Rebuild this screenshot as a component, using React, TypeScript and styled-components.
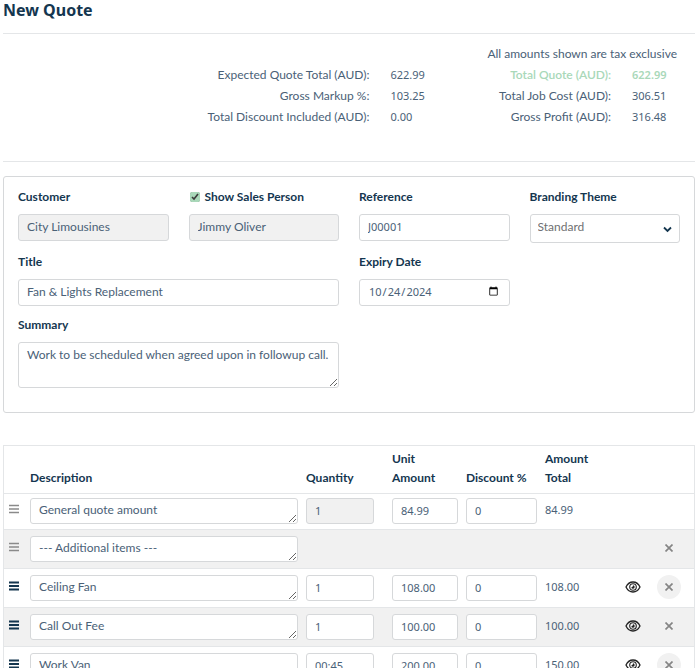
import React from 'react';
import styled, { createGlobalStyle, css } from 'styled-components';

const ink = '#4a6177';
const heading = '#14364f';
const line = '#e4e6e8';
const controlLine = '#d6d8da';
const shade = '#f1f1f1';
const mint = '#a9d8b9';
const figureFont = css`
  font-family: "Noto Sans", sans-serif;
  font-size: 11px;
`;

const GlobalStyle = createGlobalStyle`
  *, *::before, *::after { box-sizing: border-box; }
  html { scrollbar-width: none; }
  body {
    margin: 0;
    background: #fff;
    color: ${ink};
    font: 12px/20px Lato, "Noto Sans", sans-serif;
  }
  input, textarea, select, button { font: inherit; color: inherit; margin: 0; }
`;

const Page = styled.main`
  padding: 0 5px 0 3px;
`;

const Header = styled.header`
  height: 34px;
  border-bottom: 1px solid ${line};
`;

const PageTitle = styled.h1`
  margin: 0;
  color: ${heading};
  font-family: "Noto Sans", sans-serif;
  font-size: 16px;
  line-height: 20px;
  font-weight: 700;
`;

const Totals = styled.section`
  display: flex;
  justify-content: flex-end;
  align-items: flex-end;
  gap: 52px;
  padding: 9px 18px 34px 0;
  border-bottom: 1px solid ${line};
`;

const TotalsGroup = styled.div`
  display: flex;
  flex-direction: column;
  align-items: flex-end;
`;

const Note = styled.p`
  margin: 0;
  line-height: 21px;
`;

const Figures = styled.dl`
  display: grid;
  grid-template-columns: auto 45px;
  column-gap: 21px;
  margin: 0;
`;

const FigureLabel = styled.dt<{ $accent?: boolean }>`
  text-align: right;
  line-height: 21px;
  ${p => p.$accent && css`color: ${mint}; font-weight: 600;`}
`;

const FigureValue = styled.dd<{ $accent?: boolean }>`
  margin: 0;
  ${figureFont}
  line-height: 21px;
  ${p => p.$accent && css`color: ${mint}; font-weight: 600;`}
`;

const Panel = styled.form`
  display: grid;
  grid-template-columns: repeat(4, minmax(0, 1fr));
  gap: 9px 20px;
  margin-top: 14px;
  padding: 10px 14px 24px;
  border: 1px solid ${controlLine};
  border-radius: 3px;
`;

const Field = styled.div<{ $wide?: boolean }>`
  display: flex;
  flex-direction: column;
  gap: 7px;
  grid-column: span ${p => (p.$wide ? 2 : 1)};
`;

const LabelRow = styled.div`
  display: flex;
  align-items: center;
  gap: 5px;
  padding-left: 1px;
`;

const Label = styled.label`
  color: ${heading};
  font-weight: 700;
`;

const Tick = styled.input`
  width: 10px;
  height: 10px;
  accent-color: ${mint};
`;

const control = css`
  display: block;
  width: 100%;
  padding: 0 8px;
  border: 1px solid ${controlLine};
  border-radius: 3px;
  background: #fff;
  outline: none;
`;

const TextInput = styled.input<{ $figure?: boolean }>`
  ${control}
  height: 27px;
  padding-bottom: 2px;
  ${p => p.$figure && figureFont}
  &:read-only:not([type='date']) { background: ${shade}; }
`;

const DateInput = styled(TextInput)`
  width: calc(50% - 10px);
`;

const Notes = styled.textarea`
  ${control}
  height: 46px;
  padding-top: 2px;
  resize: vertical;
`;

const SelectBox = styled.div`
  position: relative;
`;

const Select = styled.select`
  ${control}
  appearance: none;
  height: 29px;
  padding: 0 24px 4px 7px;
  color: #6f7072;
`;

const Chevron = styled.svg`
  position: absolute;
  right: 8px;
  top: 12px;
  width: 9px;
  height: 7px;
  pointer-events: none;
`;

const Items = styled.table`
  width: 100%;
  margin-top: 32px;
  table-layout: fixed;
  border-collapse: separate;
  border-spacing: 0;
  border: 1px solid ${line};
`;

const Col = styled.col<{ $width?: number }>`
  width: ${p => (p.$width ? `${p.$width}px` : 'auto')};
`;

const HeadCell = styled.th`
  height: 47px;
  padding: 2px 4px 6px;
  vertical-align: bottom;
  text-align: left;
  color: ${heading};
  font-weight: 700;
  line-height: 19px;
`;

const Row = styled.tr<{ $shaded?: boolean; $first?: boolean }>`
  background: ${p => (p.$shaded ? shade : '#fff')};
  & > td {
    border-top: 1px solid ${line};
    padding: ${p => (p.$first ? '4px 4px 5px' : '6px 4px')};
  }
`;

const Cell = styled.td<{ $inset?: boolean }>`
  vertical-align: top;
  ${p => p.$inset && css`&& { padding-right: 14px; }`}
`;

const AmountCell = styled.td`
  vertical-align: top;
  ${figureFont}
  line-height: 23px;
`;

const LineText = styled.textarea`
  ${control}
  height: 26px;
  padding-top: 1px;
  resize: vertical;
  overflow: hidden;
`;

const LineInput = styled.input`
  ${control}
  height: 26px;
  padding-bottom: 2px;
  ${figureFont}
  &:disabled { background: ${shade}; color: ${ink}; }
`;

const IconButton = styled.button<{ $round?: boolean }>`
  display: flex;
  align-items: center;
  justify-content: center;
  width: 24px;
  height: 24px;
  padding: 0;
  border: 0;
  border-radius: 12px;
  background: ${p => (p.$round ? shade : 'transparent')};
`;

const GripButton = styled(IconButton)`
  width: 12px;
  height: 22px;
`;

const RemoveButton = styled(IconButton)`
  margin-left: 4px;
`;

const Grip = ({ faded }: { faded?: boolean }) => (
  <svg width="10" height="10" viewBox="0 0 10 10" aria-hidden="true">
    <path
      d="M0 1.500h10M0 5h10M0 8.500h10"
      stroke={faded ? '#8a8a8a' : heading}
      strokeWidth={faded ? 1.4 : 1.8}
    />
  </svg>
);

const Eye = () => (
  <svg width="16" height="12" viewBox="0 0 16 12" fill="none" stroke="#222" aria-hidden="true">
    <path d="M1 6C2.600 2.700 5 1 8 1s5.400 1.700 7 5c-1.600 3.300-4 5-7 5S2.600 9.300 1 6z" strokeWidth="1.300" />
    <circle cx="8" cy="6" r="3.300" strokeWidth="1.100" />
    <path d="M8 4.300a1.700 1.700 0 1 1-1.700 1.900c.9.100 1.700-.6 1.700-1.900z" fill="#222" stroke="none" />
  </svg>
);

const Cross = () => (
  <svg width="8" height="8" viewBox="0 0 8 8" aria-hidden="true">
    <path d="M.5.5l7 7M7.500.5l-7 7" stroke="#858585" strokeWidth="1.700" />
  </svg>
);

interface Item {
  text: string;
  quantity?: string;
  price?: string;
  total?: string;
  fixed?: boolean;
  heading?: boolean;
}

const items: Item[] = [
  { text: 'General quote amount', quantity: '1', price: '84.99', total: '84.99', fixed: true },
  { text: '--- Additional items ---', heading: true },
  { text: 'Ceiling Fan', quantity: '1', price: '108.00', total: '108.00' },
  { text: 'Call Out Fee', quantity: '1', price: '100.00', total: '100.00' },
  { text: 'Work Van', quantity: '00:45', price: '200.00', total: '150.00' },
];

const ItemRow = ({ item, index }: { item: Item; index: number }) => {
  const shaded = index % 2 === 1;
  return (
    <Row $shaded={shaded} $first={index === 0}>
      <Cell>
        <GripButton type="button" aria-label={`Move ${item.text}`}>
          <Grip faded={item.fixed || item.heading} />
        </GripButton>
      </Cell>
      <Cell>
        <LineText aria-label="Description" rows={1} defaultValue={item.text} />
      </Cell>
      <Cell $inset>
        {item.quantity && <LineInput aria-label="Quantity" defaultValue={item.quantity} disabled={item.fixed} />}
      </Cell>
      <Cell>{item.price && <LineInput aria-label="Unit amount" defaultValue={item.price} />}</Cell>
      <Cell>{item.price && <LineInput aria-label="Discount %" defaultValue="0" />}</Cell>
      <AmountCell>{item.total}</AmountCell>
      <Cell>
        {!item.fixed && !item.heading && (
          <IconButton type="button" aria-label={`View ${item.text}`}>
            <Eye />
          </IconButton>
        )}
      </Cell>
      <Cell>
        {!item.fixed && (
          <RemoveButton type="button" $round={!shaded} aria-label={`Remove ${item.text}`}>
            <Cross />
          </RemoveButton>
        )}
      </Cell>
    </Row>
  );
};

export default function App() {
  return (
    <Page>
      <GlobalStyle />
      <Header>
        <PageTitle>New Quote</PageTitle>
      </Header>

      <Totals>
        <Figures>
          <FigureLabel>Expected Quote Total (AUD):</FigureLabel>
          <FigureValue>622.99</FigureValue>
          <FigureLabel>Gross Markup %:</FigureLabel>
          <FigureValue>103.25</FigureValue>
          <FigureLabel>Total Discount Included (AUD):</FigureLabel>
          <FigureValue>0.00</FigureValue>
        </Figures>
        <TotalsGroup>
          <Note>All amounts shown are tax exclusive</Note>
          <Figures>
            <FigureLabel $accent>Total Quote (AUD):</FigureLabel>
            <FigureValue $accent>622.99</FigureValue>
            <FigureLabel>Total Job Cost (AUD):</FigureLabel>
            <FigureValue>306.51</FigureValue>
            <FigureLabel>Gross Profit (AUD):</FigureLabel>
            <FigureValue>316.48</FigureValue>
          </Figures>
        </TotalsGroup>
      </Totals>

      <Panel>
        <Field>
          <Label htmlFor="customer">Customer</Label>
          <TextInput id="customer" readOnly defaultValue="City Limousines" />
        </Field>
        <Field>
          <LabelRow>
            <Tick id="show-sales" type="checkbox" defaultChecked />
            <Label htmlFor="show-sales">Show Sales Person</Label>
          </LabelRow>
          <TextInput aria-label="Sales person" readOnly defaultValue="Jimmy Oliver" />
        </Field>
        <Field>
          <Label htmlFor="reference">Reference</Label>
          <TextInput id="reference" $figure defaultValue="J00001" />
        </Field>
        <Field>
          <Label htmlFor="theme">Branding Theme</Label>
          <SelectBox>
            <Select id="theme" defaultValue="Standard">
              <option>Standard</option>
            </Select>
            <Chevron viewBox="0 0 9 7" fill="none" aria-hidden="true">
              <path d="M1 1.500l3.500 3.500L8 1.500" stroke={heading} strokeWidth="1.800" />
            </Chevron>
          </SelectBox>
        </Field>
        <Field $wide>
          <Label htmlFor="title">Title</Label>
          <TextInput id="title" defaultValue="Fan &amp; Lights Replacement" />
        </Field>
        <Field $wide>
          <Label htmlFor="expiry">Expiry Date</Label>
          <DateInput id="expiry" type="date" $figure defaultValue="2024-10-24" />
        </Field>
        <Field $wide>
          <Label htmlFor="summary">Summary</Label>
          <Notes id="summary" defaultValue="Work to be scheduled when agreed upon in followup call." />
        </Field>
      </Panel>

      <Items>
        <colgroup>
          <Col $width={22} />
          <Col />
          <Col $width={86} />
          <Col $width={74} />
          <Col $width={79} />
          <Col $width={76} />
          <Col $width={32} />
          <Col $width={45} />
        </colgroup>
        <thead>
          <tr>
            <HeadCell aria-label="Order" />
            <HeadCell>Description</HeadCell>
            <HeadCell>Quantity</HeadCell>
            <HeadCell>Unit Amount</HeadCell>
            <HeadCell>Discount %</HeadCell>
            <HeadCell>Amount Total</HeadCell>
            <HeadCell aria-label="View" />
            <HeadCell aria-label="Remove" />
          </tr>
        </thead>
        <tbody>
          {items.map((item, index) => (
            <ItemRow key={item.text} item={item} index={index} />
          ))}
        </tbody>
      </Items>
    </Page>
  );
}
